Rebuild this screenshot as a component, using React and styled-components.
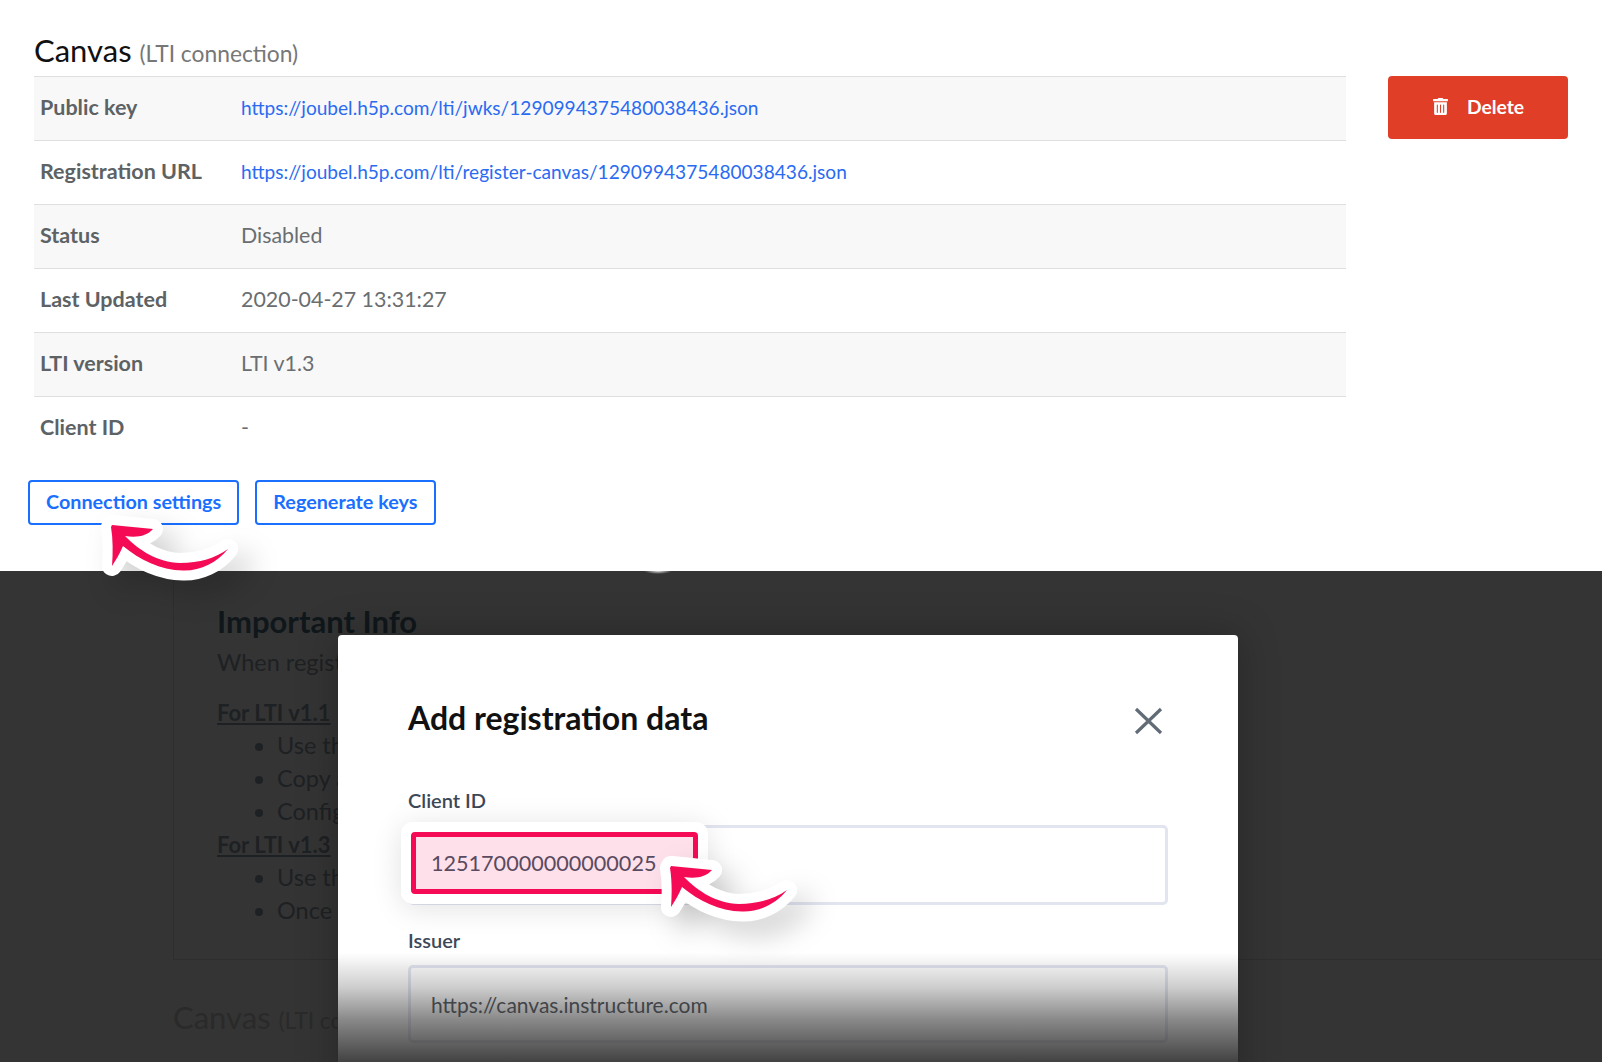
import React from 'react';
import styled, { createGlobalStyle } from 'styled-components';
import { FaTrashAlt } from 'react-icons/fa';

const GlobalStyle = createGlobalStyle`
  html, body {
    margin: 0;
    padding: 0;
    background: #fff;
    font-family: Lato, "Noto Sans", sans-serif;
  }
  * {
    box-sizing: border-box;
  }
`;

const Page = styled.div`
  position: relative;
  width: 1602px;
  height: 1062px;
  overflow: hidden;
`;

const TopSection = styled.section`
  display: flex;
  height: 571px;
  padding-left: 28px;
`;

const Main = styled.div`
  width: 1318px;
`;

const Heading = styled.h2`
  margin: 30px 0 3px 6px;
  font-size: 31px;
  line-height: 40px;
  font-weight: 400;
  color: #111;
  small {
    font-size: 22.8px;
    color: #777;
  }
`;

const Table = styled.div`
  margin-left: 6px;
`;

const Row = styled.div`
  display: flex;
  align-items: center;
  height: 64px;
  padding: 0 0 3px 6px;
  border-top: 1px solid #dfdfdf;
  background: ${(p) => (p.$shaded ? '#f8f8f8' : '#fff')};
`;

const Label = styled.div`
  width: 201px;
  font-size: 21.5px;
  font-weight: 700;
  color: #5d6265;
`;

const Value = styled.div`
  font-size: 21.4px;
  color: #6a6e71;
`;

const Link = styled.a`
  font-size: 19.1px;
  color: #2a6bf2;
  text-decoration: none;
`;

const Actions = styled.div`
  display: flex;
  gap: 16px;
  margin-top: 20px;
`;

const OutlineButton = styled.button`
  height: 45px;
  padding: 0 16px 4px;
  border: 2px solid #1a6fff;
  border-radius: 4px;
  background: #fff;
  color: #1a6fff;
  font-family: inherit;
  font-size: 19.8px;
  font-weight: 700;
`;

const DeleteButton = styled.button`
  display: flex;
  align-items: center;
  justify-content: center;
  gap: 18px;
  width: 180px;
  height: 63px;
  margin: 76px 0 0 42px;
  padding-bottom: 3px;
  border: 0;
  border-radius: 4px;
  background: #e03e27;
  color: #fff;
  font-family: inherit;
  font-size: 19.3px;
  font-weight: 700;
`;

const DarkSection = styled.section`
  position: relative;
  height: 491px;
  padding-left: 173px;
  background: #343434;
  color: #1e2123;
`;

const Panel = styled.div`
  padding: 30px 0 32px 43px;
  border-left: 1px solid #2e2e2e;
  border-bottom: 1px solid #2e2e2e;
`;

const InfoTitle = styled.h3`
  margin: 0 0 5px;
  font-size: 31px;
  line-height: 40px;
  font-weight: 700;
  color: #10171b;
`;

const InfoText = styled.p`
  margin: 0 0 17px;
  font-size: 23.5px;
  line-height: 33px;
`;

const InfoLink = styled.div`
  font-size: 22px;
  line-height: 33px;
  font-weight: 700;
  text-decoration: underline;
`;

const InfoList = styled.ul`
  margin: 0;
  padding-left: 60px;
  font-size: 23.5px;
  line-height: 33px;
`;

const Faded = styled.h2`
  margin: 37px 0 0 0;
  font-size: 31px;
  line-height: 40px;
  font-weight: 400;
  color: #2a2a2a;
  small {
    font-size: 22.8px;
  }
`;

const Glint = styled.div`
  position: absolute;
  left: 644px;
  top: 0;
  width: 28px;
  height: 3px;
  background: radial-gradient(ellipse at top, rgba(255, 255, 255, 0.85), rgba(255, 255, 255, 0) 70%);
`;

const Modal = styled.div`
  position: absolute;
  left: 338px;
  top: 635px;
  width: 900px;
  height: 500px;
  padding: 63px 70px 0;
  border-radius: 4px;
  background: #fff;
  box-shadow: 0 0 40px rgba(0, 0, 0, 0.25);
`;

const Fade = styled.div`
  position: absolute;
  left: 0;
  right: 0;
  top: 318px;
  height: 109px;
  z-index: 4;
  background: linear-gradient(
    to bottom,
    rgba(52, 52, 52, 0),
    rgba(52, 52, 52, 0.24) 31%,
    rgba(52, 52, 52, 0.58) 61%,
    rgba(52, 52, 52, 0.93)
  );
`;

const ModalHeader = styled.div`
  display: flex;
  align-items: center;
  justify-content: space-between;
  margin-bottom: 48px;
`;

const ModalTitle = styled.h3`
  margin: 0;
  font-size: 32px;
  line-height: 40px;
  font-weight: 700;
  color: #111;
`;

const CloseIcon = styled.svg`
  width: 29px;
  height: 28px;
  margin: 6px 5px 0 0;
`;

const FieldLabel = styled.div`
  margin-bottom: 11px;
  font-size: 20px;
  line-height: 28px;
  font-weight: 600;
  color: #3c4858;
`;

const Field = styled.div`
  position: relative;
  display: flex;
  align-items: center;
  height: ${(p) => p.$height}px;
  margin-bottom: 21px;
  padding-left: 20px;
  border: 3px solid #e2e5f0;
  border-radius: 5px;
  font-size: 21px;
  color: #4a5058;
`;

const Highlight = styled.div`
  position: absolute;
  left: 0;
  top: 4px;
  display: flex;
  align-items: center;
  width: 287px;
  height: 62px;
  padding: 0 0 0 15px;
  border: 5px solid #f50a55;
  border-radius: 4px;
  background: #fde0ea;
  box-shadow: 0 0 0 10px #fff, 0 4px 30px 10px rgba(0, 0, 0, 0.12);
  color: #5a4a60;
  font-size: 21.6px;
`;

const Arrow = styled.svg`
  position: absolute;
  left: ${(p) => p.$x}px;
  top: ${(p) => p.$y}px;
  width: 170px;
  height: 70px;
  overflow: visible;
  z-index: 3;
`;

const shape =
  'M17 10 C30 11 45 13 58 14 C52 21 42 23 30 21 C45 36 62 47 85 48 C105 48 120 43 133 34 C122 48 105 56 88 55.5 C65 55 45 45 28 31 C25 38 21 45 17 51 C18 38 18 24 16 12 Z';

function SwooshArrow({ x, y }) {
  return (
    <Arrow $x={x} $y={y} viewBox="0 0 170 70">
      <path
        d={shape}
        fill="#fff"
        stroke="#fff"
        strokeWidth="20"
        strokeLinejoin="round"
        style={{ filter: 'drop-shadow(14px 14px 14px rgba(0,0,0,0.18))' }}
      />
      <path d={shape} fill="#f50a55" />
    </Arrow>
  );
}

const rows = [
  { label: 'Public key', link: 'https://joubel.h5p.com/lti/jwks/1290994375480038436.json' },
  { label: 'Registration URL', link: 'https://joubel.h5p.com/lti/register-canvas/1290994375480038436.json' },
  { label: 'Status', value: 'Disabled' },
  { label: 'Last Updated', value: '2020-04-27 13:31:27' },
  { label: 'LTI version', value: 'LTI v1.3' },
  { label: 'Client ID', value: '-' },
];

export default function App() {
  return (
    <Page>
      <GlobalStyle />
      <TopSection>
        <Main>
          <Heading>
            Canvas <small>(LTI connection)</small>
          </Heading>
          <Table>
            {rows.map((row, i) => (
              <Row key={row.label} $shaded={i % 2 === 0}>
                <Label>{row.label}</Label>
                {row.link ? <Link href="#">{row.link}</Link> : <Value>{row.value}</Value>}
              </Row>
            ))}
          </Table>
          <Actions>
            <OutlineButton>Connection settings</OutlineButton>
            <OutlineButton>Regenerate keys</OutlineButton>
          </Actions>
        </Main>
        <DeleteButton>
          <FaTrashAlt size={17} />
          Delete
        </DeleteButton>
      </TopSection>
      <DarkSection>
        <Glint />
        <Panel>
          <InfoTitle>Important Info</InfoTitle>
          <InfoText>When registering</InfoText>
          <InfoLink>For LTI v1.1</InfoLink>
          <InfoList>
            <li>Use the</li>
            <li>Copy and</li>
            <li>Configure</li>
          </InfoList>
          <InfoLink>For LTI v1.3</InfoLink>
          <InfoList>
            <li>Use the</li>
            <li>Once you</li>
          </InfoList>
        </Panel>
        <Faded>
          Canvas <small>(LTI connection)</small>
        </Faded>
      </DarkSection>
      <Modal>
        <ModalHeader>
          <ModalTitle>Add registration data</ModalTitle>
          <CloseIcon viewBox="0 0 29 28">
            <path d="M2 2 L27 26 M27 2 L2 26" stroke="#626c76" strokeWidth="3.2" fill="none" />
          </CloseIcon>
        </ModalHeader>
        <FieldLabel>Client ID</FieldLabel>
        <Field $height={80}>
          <Highlight>125170000000000025</Highlight>
        </Field>
        <FieldLabel>Issuer</FieldLabel>
        <Field $height={78}>https://canvas.instructure.com</Field>
        <Fade />
      </Modal>
      <SwooshArrow x={95} y={515} />
      <SwooshArrow x={654} y={856} />
    </Page>
  );
}
